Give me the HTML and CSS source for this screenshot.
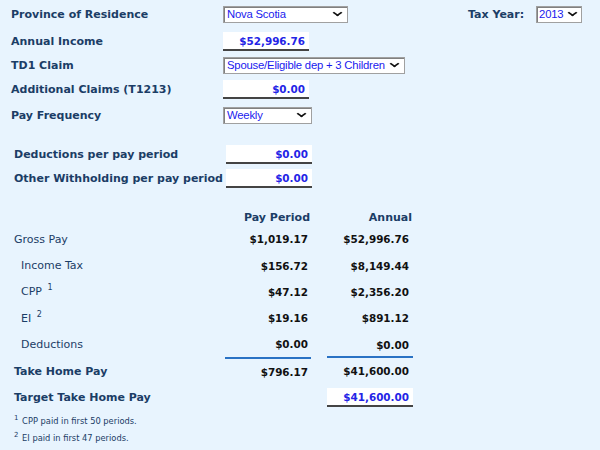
FILE: index.html
```html
<!DOCTYPE html>
<html lang="en">

<head>
    <meta charset="UTF-8">
    <title>Take Home Pay Calculator</title>
    <link rel="stylesheet" href="styles.css">
</head>

<body>
    <div class="calc">
        <!-- Main inputs -->
        <div class="inputs">
            <div class="row">
                <label class="lbl">Province of Residence</label>
                <div class="select sel-prov">Nova Scotia<span class="chev"></span></div>
                <label class="lbl year-lbl">Tax Year:</label>
                <div class="select sel-year">2013<span class="chev"></span></div>
            </div>
            <div class="row">
                <label class="lbl">Annual Income</label>
                <div class="field">$52,996.76</div>
            </div>
            <div class="row">
                <label class="lbl">TD1 Claim</label>
                <div class="select sel-td1">Spouse/Eligible dep + 3 Children<span class="chev"></span></div>
            </div>
            <div class="row">
                <label class="lbl">Additional Claims (T1213)</label>
                <div class="field">$0.00</div>
            </div>
            <div class="row">
                <label class="lbl">Pay Frequency</label>
                <div class="select sel-freq">Weekly<span class="chev"></span></div>
            </div>
        </div>

        <div class="extras">
            <div class="row">
                <label class="lbl">Deductions per pay period</label>
                <div class="field">$0.00</div>
            </div>
            <div class="row">
                <label class="lbl">Other Withholding per pay period</label>
                <div class="field">$0.00</div>
            </div>
        </div>

        <!-- Results -->
        <table class="results">
            <tr class="head">
                <td></td>
                <td>Pay Period</td>
                <td>Annual</td>
            </tr>
            <tr>
                <td class="name">Gross Pay</td>
                <td class="num">$1,019.17</td>
                <td class="num">$52,996.76</td>
            </tr>
            <tr>
                <td class="name sub">Income Tax</td>
                <td class="num">$156.72</td>
                <td class="num">$8,149.44</td>
            </tr>
            <tr>
                <td class="name sub">CPP <sup>1</sup></td>
                <td class="num">$47.12</td>
                <td class="num">$2,356.20</td>
            </tr>
            <tr>
                <td class="name sub">EI <sup>2</sup></td>
                <td class="num">$19.16</td>
                <td class="num">$891.12</td>
            </tr>
            <tr class="last">
                <td class="name sub">Deductions</td>
                <td class="num">$0.00</td>
                <td class="num">$0.00</td>
            </tr>
            <tr>
                <td class="name strong">Take Home Pay</td>
                <td class="num">$796.17</td>
                <td class="num">$41,600.00</td>
            </tr>
            <tr>
                <td class="name strong">Target Take Home Pay</td>
                <td></td>
                <td><div class="field target">$41,600.00</div></td>
            </tr>
        </table>

        <div class="notes">
            <p><sup>1</sup> CPP paid in first 50 periods.</p>
            <p><sup>2</sup> EI paid in first 47 periods.</p>
        </div>
    </div>
</body>

</html>
```

FILE: styles.css
```css
* {
    margin: 0;
    padding: 0;
    box-sizing: border-box;
}

body {
    background: #e8f4fe;
    font-family: "DejaVu Sans", Verdana, sans-serif;
    font-size: 11px;
    color: #1b3d66;
}

.calc {
    padding: 5px 0 0 11px;
}

.row {
    display: flex;
    align-items: center;
    height: 25px;
}

.lbl {
    width: 212px;
    font-weight: bold;
    font-size: 11px;
    color: #1b3d66;
}

.inputs .row:nth-child(1) {
    height: 18px;
    margin-bottom: 8px;
}

.inputs .row:nth-child(2) {
    height: 20px;
    margin-bottom: 5px;
}

.inputs .row:nth-child(3) {
    height: 18px;
    margin-bottom: 5px;
}

.inputs .row:nth-child(4) {
    height: 20px;
    margin-bottom: 6px;
}

.inputs .row:nth-child(5) {
    height: 20px;
}

.year-lbl {
    width: auto;
    margin-left: 120px;
    margin-right: 12px;
}

/* fake select boxes */
.select {
    position: relative;
    height: 17px;
    background: #fff;
    border: 1px solid #a0a0a0;
    box-shadow: inset 1px 1px 0 #808080;
    font-family: "Liberation Sans", Arial, sans-serif;
    font-size: 11.3px;
    letter-spacing: -0.2px;
    line-height: 15px;
    color: #1a1aee;
    padding-left: 3px;
    white-space: nowrap;
}

.chev {
    position: absolute;
    right: 5px;
    top: 3px;
    width: 7px;
    height: 7px;
    border-right: 2px solid #111;
    border-bottom: 2px solid #111;
    transform: scale(1, 0.7) rotate(45deg);
    transform-origin: 50% 30%;
}

.sel-prov { width: 125px; }
.sel-year { width: 46px; padding-left: 2px; }
.sel-year .chev { right: 4px; }
.sel-td1 { width: 182px; padding-right: 18px; }
.sel-freq { width: 89px; }

/* text inputs */
.field {
    width: 86px;
    height: 19px;
    background: #fff;
    border-bottom: 2px solid #444;
    color: #2424e6;
    font-weight: bold;
    font-size: 10.4px;
    text-align: right;
    padding: 3px 4px 0 0;
}

.extras {
    margin-top: 17px;
    padding-left: 3px;
}

.extras .row {
    height: 24px;
}

.results {
    border-collapse: collapse;
    margin-top: 18px;
    margin-left: 3px;
}

.results td {
    height: 26.4px;
    padding: 0;
    vertical-align: middle;
}

.results .head td {
    font-weight: bold;
    color: #1b3d66;
    text-align: right;
    height: 18px;
}

.results td:nth-child(1) {
    width: 211px;
}

.results td:nth-child(2) {
    width: 86px;
    padding-right: 3px;
}

.results .head td:nth-child(2) {
    padding-right: 1px;
}

.results td:nth-child(3) {
    width: 102px;
    padding-left: 16px;
}

.results .head td:nth-child(3) {
    padding-right: 1px;
}

.name {
    color: #1b3d66;
}

.name.sub {
    padding-left: 7px !important;
}

.name.strong {
    font-weight: bold;
}

sup {
    font-size: 8px;
    vertical-align: 5px;
    line-height: 0;
    margin-left: 2px;
}

.num {
    font-weight: bold;
    font-size: 10.4px;
    color: #111;
    text-align: right;
}

.results td.num:nth-child(3) {
    padding-right: 4px;
}

.last td.num {
    border-bottom: 2px solid #2a72c4;
}

.last td.num:nth-child(3) {
    border-bottom: none;
    background: linear-gradient(#2a72c4, #2a72c4) no-repeat 16px 100% / calc(100% - 16px) 2px;
}

.field.target {
    width: 86px;
}

.notes {
    margin-top: 2px;
    margin-left: 3px;
    font-size: 8.3px;
    color: #1b3d66;
}

.notes p {
    height: 17px;
    line-height: 17px;
}

.notes sup {
    font-size: 7px;
    vertical-align: 4px;
    margin: 0 1px 0 0;
}
```
